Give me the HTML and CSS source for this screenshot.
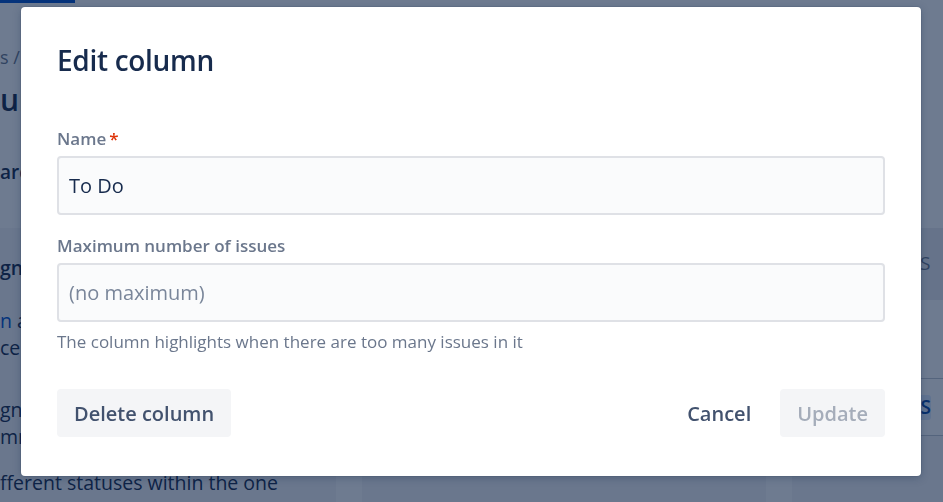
FILE: index.html
```html
<!DOCTYPE html>
<html lang="en">
<head>
<meta charset="utf-8">
<title>Edit column</title>
<link rel="stylesheet" href="styles.css">
</head>
<body>
<div class="page">
  <div class="topbar"><span class="tab-indicator"></span></div>
  <div class="page-head">
    <div class="crumbs">s /</div>
    <div class="page-title">un</div>
    <div class="search">arc</div>
  </div>
  <div class="board">
    <div class="col col-side">
      <div class="side-title">gn</div>
      <p class="side-text"><span class="link">n</span> ar<br>ce</p>
      <p class="side-text second">gn<br>mn</p>
      <p class="side-text last">fferent statuses within the one</p>
    </div>
    <div class="gap"></div>
    <div class="col col-mid"></div>
    <div class="gap"></div>
    <div class="col col-right">
      <div class="col-head">S</div>
      <div class="col-space"></div>
      <div class="col-card"><span class="badge">S</span></div>
    </div>
  </div>
</div>

<div class="overlay">
  <div class="modal" role="dialog" aria-labelledby="modal-title">
    <h1 class="modal-title" id="modal-title">Edit column</h1>

    <div class="field">
      <label class="field-label" for="name">Name<span class="required">*</span></label>
      <div class="input"><span class="input-value">To Do</span></div>
    </div>

    <div class="field field-second">
      <label class="field-label" for="max">Maximum number of issues</label>
      <div class="input"><span class="input-placeholder">(no maximum)</span></div>
      <div class="helper">The column highlights when there are too many issues in it</div>
    </div>

    <div class="modal-footer">
      <button class="btn btn-default">Delete column</button>
      <div class="footer-right">
        <button class="btn btn-subtle">Cancel</button>
        <button class="btn btn-default btn-disabled">Update</button>
      </div>
    </div>
  </div>
</div>
</body>
</html>
```

FILE: styles.css
```css
* { box-sizing: border-box; }

html, body {
  margin: 0;
  padding: 0;
  width: 943px;
  height: 502px;
  overflow: hidden;
  font-family: "Open Sans", "Noto Sans", "DejaVu Sans", sans-serif;
  background: #ffffff;
}

/* ---------- background page ---------- */
.page {
  width: 943px;
  height: 502px;
  overflow: hidden;
  color: #172B4D;
}

.topbar {
  height: 3px;
  display: flex;
}
.tab-indicator {
  width: 75px;
  height: 3px;
  background: #0052CC;
}

.page-head {
  height: 225px;
  padding-top: 40px;
}
.crumbs {
  font-size: 18px;
  line-height: 28px;
  color: #6B778C;
  white-space: nowrap;
}
.page-title {
  margin-top: 8px;
  font-size: 30px;
  font-weight: 600;
  line-height: 42px;
  white-space: nowrap;
}
.search {
  margin-top: 38px;
  font-size: 19px;
  font-weight: 600;
  line-height: 26px;
  white-space: nowrap;
}

.board {
  display: flex;
  height: 274px;
}
.col {
  background: #F4F5F7;
}
.gap {
  width: 26px;
  background: #ffffff;
}
.col-side {
  width: 336px;
  padding-top: 26px;
  font-size: 19.5px;
  white-space: nowrap;
}
.side-title {
  font-weight: 600;
  line-height: 28px;
}
.side-text {
  margin: 25px 0 0;
  line-height: 27px;
}
.side-text.second {
  margin-top: 35px;
}
.side-text.last {
  margin-top: 19px;
}
.link { color: #0052CC; }

.col-mid {
  width: 404px;
}
.col-right {
  flex: 1;
  display: flex;
  flex-direction: column;
}
.col-head {
  height: 72px;
  padding: 22px 0 0 128px;
  font-size: 19px;
  color: #6B778C;
  background: #EBECF0;
}
.col-space {
  height: 78px;
  background: #ffffff;
}
.col-card {
  height: 58px;
  border-top: 1px solid #C1C7D0;
  border-bottom: 1px solid #C1C7D0;
  background: #ffffff;
  display: flex;
  justify-content: flex-end;
  align-items: center;
  padding-right: 12px;
}
.badge {
  display: inline-block;
  width: 22px;
  height: 25px;
  border-radius: 3px;
  background: #DEEBFF;
  color: #0747A6;
  font-size: 19px;
  font-weight: 600;
  line-height: 25px;
  text-align: right;
}

/* ---------- overlay & modal ---------- */
.overlay {
  position: fixed;
  inset: 0;
  background: rgba(9, 30, 66, 0.59);
  display: flex;
  justify-content: flex-start;
  align-items: flex-start;
  padding: 7px 0 0 21px;
}

.modal {
  width: 900px;
  background: #ffffff;
  border-radius: 4px;
  padding: 35px 36px 39px;
  box-shadow: 0 0 0 1px rgba(9, 30, 66, 0.08), 0 2px 8px rgba(9, 30, 66, 0.25);
}

.modal-title {
  margin: 0;
  font-size: 28px;
  line-height: 36px;
  font-weight: 600;
  letter-spacing: -0.3px;
  color: #172B4D;
}

.field {
  margin-top: 49px;
}
.field-second {
  margin-top: 19px;
}

.field-label {
  display: block;
  font-size: 17px;
  line-height: 24px;
  font-weight: 600;
  color: #6B778C;
}
.required {
  color: #DE350B;
  margin-left: 3px;
}

.input {
  margin-top: 5px;
  height: 59px;
  border: 2px solid #DFE1E6;
  border-radius: 4px;
  background: #FAFBFC;
  padding: 0 10px;
  display: flex;
  align-items: center;
  font-size: 20px;
}
.input-value { color: #172B4D; }
.input-placeholder { color: #7A869A; }

.helper {
  margin-top: 8px;
  font-size: 17px;
  line-height: 24px;
  color: #6B778C;
}

.modal-footer {
  margin-top: 35px;
  display: flex;
  justify-content: space-between;
  align-items: center;
}
.footer-right {
  display: flex;
  gap: 12px;
}

.btn {
  height: 48px;
  padding: 0 17px;
  border: none;
  border-radius: 4px;
  font-family: inherit;
  font-size: 20px;
  font-weight: 600;
  color: #42526E;
  background: transparent;
  cursor: pointer;
}
.btn-default {
  background: #F4F5F7;
}
.btn-disabled {
  color: #A5ADBA;
  cursor: not-allowed;
}
```
